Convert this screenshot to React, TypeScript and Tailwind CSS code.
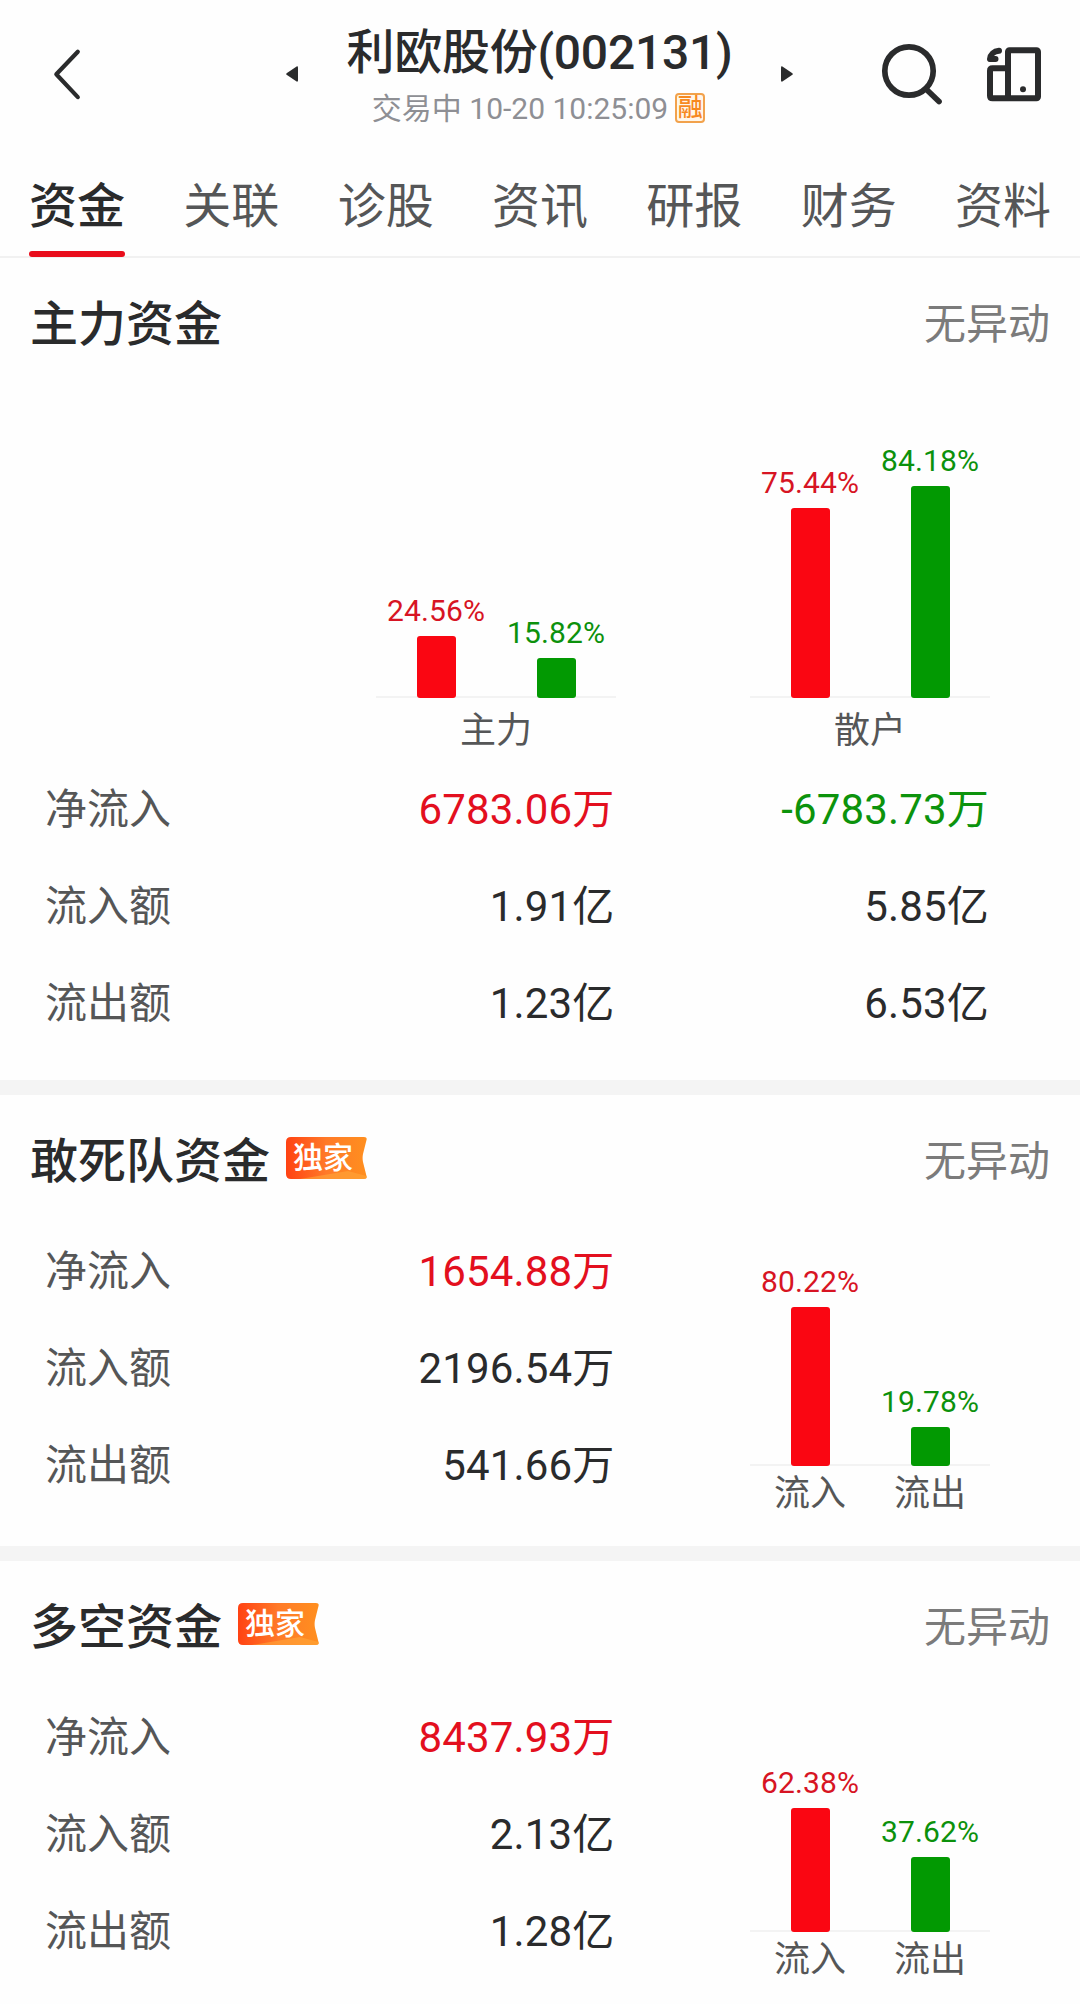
import clsx from "clsx";

interface BarItem {
  value: number;
  tone: "up" | "down";
  label?: string;
}

interface Row {
  name: string;
  values: string[];
}

const tabs = ["资金", "关联", "诊股", "资讯", "研报", "财务", "资料"];

const mainRows: Row[] = [
  { name: "净流入", values: ["6783.06万", "-6783.73万"] },
  { name: "流入额", values: ["1.91亿", "5.85亿"] },
  { name: "流出额", values: ["1.23亿", "6.53亿"] },
];

const panels = [
  {
    title: "敢死队资金",
    rows: [
      { name: "净流入", values: ["1654.88万"] },
      { name: "流入额", values: ["2196.54万"] },
      { name: "流出额", values: ["541.66万"] },
    ],
    bars: [
      { value: 80.22, tone: "up", label: "流入" },
      { value: 19.78, tone: "down", label: "流出" },
    ] as BarItem[],
  },
  {
    title: "多空资金",
    rows: [
      { name: "净流入", values: ["8437.93万"] },
      { name: "流入额", values: ["2.13亿"] },
      { name: "流出额", values: ["1.28亿"] },
    ],
    bars: [
      { value: 62.38, tone: "up", label: "流入" },
      { value: 37.62, tone: "down", label: "流出" },
    ] as BarItem[],
  },
];

function Header() {
  return (
    <header className="flex h-[147px] items-start">
      <svg className="mt-[44px] ml-[48px] h-[60px] w-[40px]" viewBox="0 0 40 60" fill="none" stroke="#2a2b2c" strokeWidth="4.2" strokeLinecap="round" strokeLinejoin="round">
        <path d="M29.8 7.700 8.300 30.300l21.500 22.800" />
      </svg>
      <svg className="mt-[66px] ml-[198px] h-[16px] w-[12px]" viewBox="0 0 12 16" fill="#2a2b2c">
        <path d="M10.6.4Q12 0 12 1.4V14.6Q12 16 10.6 15.6L.6 8.8Q-.2 8 .6 7.2Z" />
      </svg>
      <div className="flex w-[483px] flex-col items-center">
        <h1 className="mt-[18px] text-[48px] leading-[70px] font-medium tracking-[-0.25px] whitespace-nowrap text-[#2a2b2c]">
          利欧股份(002131)
        </h1>
        <div className="mr-[2px] flex items-center text-[30px] leading-[42px] whitespace-nowrap text-[#8e8f94]">
          <span>交易中 10-20 10:25:09</span>
          <span className="mb-[2px] ml-[7px] flex h-[30px] w-[30px] items-center justify-center rounded-[4px] border-2 border-[#f2a24c] bg-[#fff6ea] text-[25px] leading-[26px] font-medium text-[#f7891f]">
            融
          </span>
        </div>
      </div>
      <svg className="mt-[66px] h-[16px] w-[12px]" viewBox="0 0 12 16" fill="#2a2b2c">
        <path d="M1.4.4Q0 0 0 1.4V14.6Q0 16 1.4 15.6L11.4 8.8Q12.2 8 11.4 7.2Z" />
      </svg>
      <svg className="mt-[40px] ml-[86px] h-[66px] w-[66px]" viewBox="0 0 66 66" fill="none" stroke="#2a2b2c" strokeWidth="5.7" strokeLinecap="round">
        <circle cx="30" cy="31" r="24.2" />
        <path d="m47.500 49.500 12.500 12" />
      </svg>
      <svg className="mt-[44px] ml-[40px] h-[60px] w-[60px]" viewBox="0 0 60 60" fill="none" stroke="#2a2b2c" strokeWidth="6" strokeLinecap="round" strokeLinejoin="round">
        <rect x="23" y="6.300" width="30" height="48" rx="1.500" />
        <path d="M23 24.300H7.500Q5 24.300 5 26.800V51.800Q5 54.300 7.500 54.300H23" />
        <path d="M14 6.800C8.800 7.200 5.400 10.500 5 15H10.500" />
        <circle cx="38" cy="45.300" r="3" fill="#2a2b2c" stroke="none" />
      </svg>
    </header>
  );
}

function Tabs() {
  return (
    <nav className="flex h-[111px] justify-between border-b-2 border-[#f1f1f1] px-[29px]">
      {tabs.map((tab, i) => (
        <div
          key={tab}
          className={clsx(
            "flex h-[110px] flex-col justify-between text-[48px]",
            i === 0 ? "font-medium text-[#2a2b2c]" : "text-[#555657]"
          )}
        >
          <span className="pt-[25px] leading-[70px]">{tab}</span>
          {i === 0 && <span className="h-[6px] rounded-full bg-[#e90d1b]" />}
        </div>
      ))}
    </nav>
  );
}

function ExclusiveBadge() {
  return (
    <span className="relative mb-[7px] ml-[16px] flex h-[42px] w-[81px] items-center pl-[7px] text-[30px] leading-[42px] font-medium text-white">
      <svg className="absolute inset-0 h-full w-full" viewBox="0 0 81 42">
        <defs>
          <linearGradient id="badge" x1="0" y1="0" x2="1" y2="0">
            <stop offset="0" stopColor="#ff4213" />
            <stop offset="0.5" stopColor="#ff7a28" />
            <stop offset="1" stopColor="#ff8f1f" />
          </linearGradient>
        </defs>
        <path d="M5 0H78Q81.500 0 80.500 3L77 17Q76.200 21 77 25L80.500 39Q81.500 42 78 42H5Q0 42 0 37V5Q0 0 5 0Z" fill="url(#badge)" />
        <path d="M14 42 62 34 80.500 39Q81.500 42 78 42Z" fill="#ffa63a" fillOpacity="0.6" />
      </svg>
      <span className="relative">独家</span>
    </span>
  );
}

function SectionHeader({ title, exclusive }: { title: string; exclusive?: boolean }) {
  return (
    <div className="flex h-[126px] items-center justify-between px-[30px] pt-[7px]">
      <div className="flex items-center">
        <h2 className="text-[48px] leading-[70px] font-medium text-[#2a2b2c]">{title}</h2>
        {exclusive && <ExclusiveBadge />}
      </div>
      <span className="text-[42px] leading-[60px] text-[#7b7b7b]">无异动</span>
    </div>
  );
}

function Bars({ bars, scale }: { bars: BarItem[]; scale: number }) {
  return (
    <div className="flex w-[240px] items-end bg-[linear-gradient(#f3f3f3,#f3f3f3)] bg-[length:100%_2px] bg-bottom bg-no-repeat">
      {bars.map((bar) => (
        <div key={bar.tone} className="flex w-[120px] flex-col items-center">
          <span
            className={clsx(
              "text-[30px] leading-[36px] tracking-[0.15px]",
              bar.tone === "up" ? "text-[#d71423]" : "text-[#0c910c]"
            )}
          >
            {bar.value.toFixed(2)}%
          </span>
          <span
            className={clsx(
              "mt-[7px] w-[39px] rounded-[3px]",
              bar.tone === "up" ? "bg-[#fa0612]" : "bg-[#029902]"
            )}
            style={{ height: bar.value * scale }}
          />
        </div>
      ))}
    </div>
  );
}

function Rows({ rows }: { rows: Row[] }) {
  return (
    <div>
      {rows.map((row, r) => (
        <div key={row.name} className="flex h-[97px] items-center pl-[45px] text-[42px] leading-[60px]">
          <span className="w-[195px] pt-[1px] text-[#555657]">{row.name}</span>
          {row.values.map((value, i) => (
            <span
              key={value}
              className={clsx(
                "w-[374.500px] text-right tracking-[0.15px]",
                r > 0 && "text-[#2a2b2c]",
                r === 0 && (i === 0 ? "text-[#e30f1e]" : "text-[#0c930c]")
              )}
            >
              {value}
            </span>
          ))}
        </div>
      ))}
    </div>
  );
}

export default function App() {
  return (
    <div className="h-[2004px] w-[1080px] overflow-hidden bg-[#fefefe] font-[Roboto,'Noto_Sans_CJK_SC',sans-serif]">
      <Header />
      <Tabs />

      <section className="h-[822px]">
        <SectionHeader title="主力资金" />
        <div className="flex h-[314px] items-end gap-[134px] pl-[376px]">
          <Bars
            scale={2.52}
            bars={[
              { value: 24.56, tone: "up" },
              { value: 15.82, tone: "down" },
            ]}
          />
          <Bars
            scale={2.52}
            bars={[
              { value: 75.44, tone: "up" },
              { value: 84.18, tone: "down" },
            ]}
          />
        </div>
        <div className="flex h-[63px] gap-[134px] pl-[376px] text-center text-[36px] leading-[66px] text-[#555657]">
          <span className="w-[240px]">主力</span>
          <span className="w-[240px]">散户</span>
        </div>
        <Rows rows={mainRows} />
      </section>

      {panels.map((panel) => (
        <section key={panel.title} className="h-[466px] border-t-[15px] border-[#f4f4f4]">
          <SectionHeader title={panel.title} exclusive />
          <div className="flex">
            <div className="pt-[2px]">
              <Rows rows={panel.rows} />
            </div>
            <div className="flex h-[301px] w-[375.500px] flex-col items-end justify-end">
              <Bars bars={panel.bars} scale={1.985} />
              <div className="flex w-[240px] text-center text-[36px] leading-[56px] text-[#555657]">
                {panel.bars.map((bar) => (
                  <span key={bar.tone} className="w-[120px]">{bar.label}</span>
                ))}
              </div>
            </div>
          </div>
        </section>
      ))}
    </div>
  );
}
